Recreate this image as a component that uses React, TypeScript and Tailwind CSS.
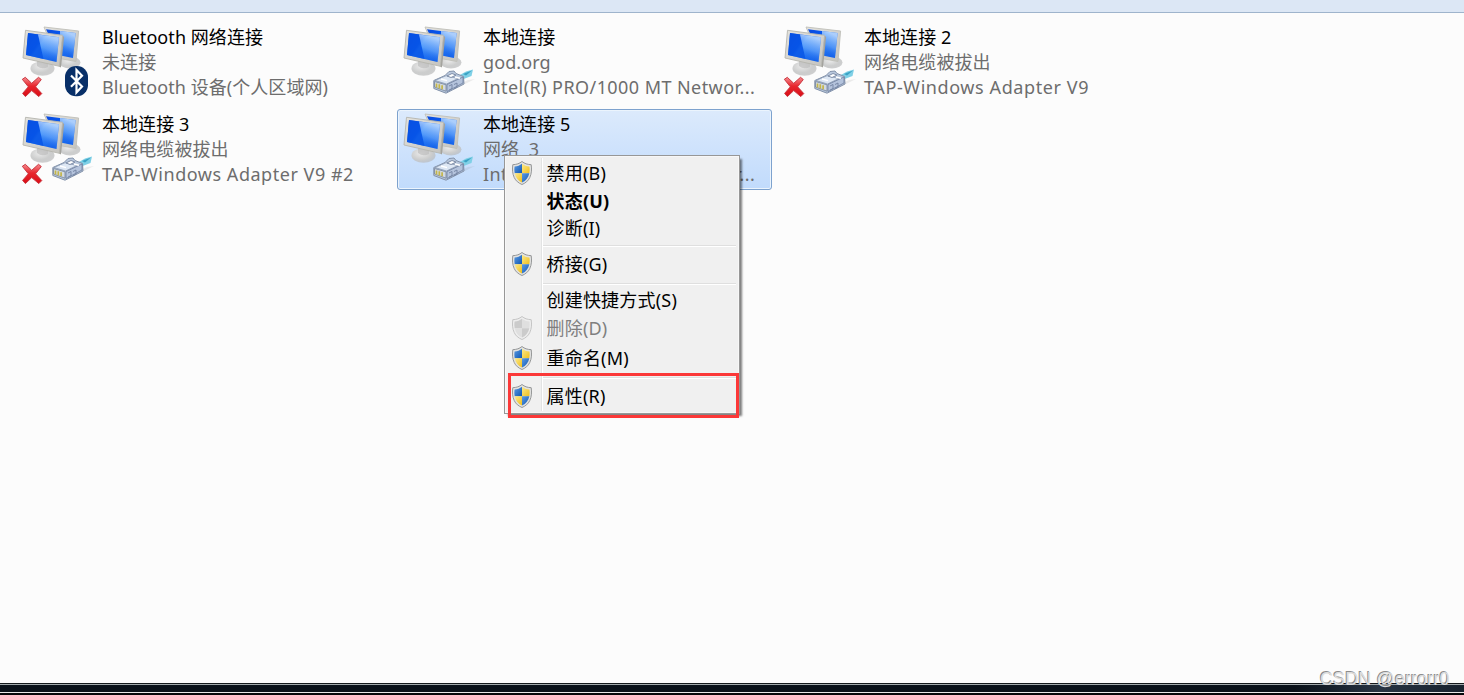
import React from 'react'

type Badge = 'bluetooth' | 'cable'

interface Connection {
  name: string
  status: string
  device: string
  badge: Badge
  off?: boolean
  selected?: boolean
  deviceCls?: string
}

const connections: Connection[] = [
  { name: 'Bluetooth 网络连接', status: '未连接', device: 'Bluetooth 设备(个人区域网)', badge: 'bluetooth', off: true, deviceCls: 'tracking-[0.05px]' },
  { name: '本地连接', status: 'god.org', device: 'Intel(R) PRO/1000 MT Networ...', badge: 'cable', deviceCls: 'tracking-[0.43px]' },
  { name: '本地连接 2', status: '网络电缆被拔出', device: 'TAP-Windows Adapter V9', badge: 'cable', off: true, deviceCls: 'tracking-[0.59px]' },
  { name: '本地连接 3', status: '网络电缆被拔出', device: 'TAP-Windows Adapter V9 #2', badge: 'cable', off: true, deviceCls: 'tracking-[0.53px]' },
  { name: '本地连接 5', status: '网络  3', device: 'Intel(R) PRO/1000 MT Networ...', badge: 'cable', selected: true, deviceCls: 'tracking-[0.43px]' },
]

function Defs() {
  return (
    <svg className="absolute h-0 w-0" aria-hidden="true">
      <defs>
        <linearGradient id="screen" x1="0" y1="0" x2="1" y2="0.6">
          <stop offset="0" stopColor="#0a49dc" />
          <stop offset="0.42" stopColor="#0758f0" />
          <stop offset="0.5" stopColor="#2379f6" />
          <stop offset="1" stopColor="#1260ea" />
        </linearGradient>
        <linearGradient id="gloss" x1="0.3" y1="0" x2="0" y2="1">
          <stop offset="0" stopColor="#cfe6ff" stopOpacity="0.8" />
          <stop offset="0.45" stopColor="#7db9ff" stopOpacity="0.55" />
          <stop offset="0.85" stopColor="#1b6cf0" stopOpacity="0.05" />
        </linearGradient>
        <linearGradient id="bezel" x1="0" y1="0" x2="1" y2="1">
          <stop offset="0" stopColor="#e4e3de" />
          <stop offset="1" stopColor="#c4c3bf" />
        </linearGradient>
        <radialGradient id="foot" cx="0.4" cy="0.35" r="0.7">
          <stop offset="0" stopColor="#ebebeb" />
          <stop offset="0.6" stopColor="#cdcece" />
          <stop offset="1" stopColor="#b4b5b6" stopOpacity="0.6" />
        </radialGradient>
        <linearGradient id="cross" x1="0" y1="0" x2="0" y2="1">
          <stop offset="0" stopColor="#f58a8e" />
          <stop offset="0.45" stopColor="#e8272e" />
          <stop offset="1" stopColor="#d90d16" />
        </linearGradient>
        <linearGradient id="shieldBlue" x1="0" y1="0" x2="1" y2="1">
          <stop offset="0" stopColor="#5c9ce2" />
          <stop offset="1" stopColor="#0f56b4" />
        </linearGradient>
        <linearGradient id="shieldGold" x1="0" y1="0" x2="1" y2="1">
          <stop offset="0" stopColor="#fbe98c" />
          <stop offset="1" stopColor="#f0bf1c" />
        </linearGradient>
      </defs>
    </svg>
  )
}

function ConnectionIcon({ badge, off }: { badge: Badge; off?: boolean }) {
  return (
    <svg className="h-[79px] w-[85px] shrink-0" viewBox="17 23 85 79">
      <ellipse cx="70" cy="62.5" rx="10.5" ry="6" fill="url(#foot)" />
      <path d="M44 27 78.6 31 76 61.500 57 58z" fill="url(#bezel)" stroke="#c0bfb9" strokeWidth="0.9" />
      <path d="M46 29.200 75.600 33 73 58 58 55z" fill="url(#screen)" />
      <path d="M60 31 75.600 33 73 58 60 55.500z" fill="url(#gloss)" />
      <ellipse cx="42.5" cy="68.500" rx="12" ry="7.300" fill="url(#foot)" />
      <path d="M37 61h11v6q-6 3-11-1z" fill="#bdbdbd" opacity="0.7" />
      <path d="M62.500 35.500 64.100 37 61 67.500 59 66.500z" fill="#a3a29d" />
      <path d="M25.500 30.300 62.600 35.300 59.300 66.300 23 58z" fill="url(#bezel)" stroke="#b6b5af" strokeWidth="0.9" />
      <path d="M28 33 59 37.200 56.500 62 26 55.100z" fill="url(#screen)" />
      <path d="M28 33 38 34.400 43.500 59 26 55.100z" fill="#0753e4" opacity="0.75" />
      <path d="M38 34.400 59 37.200 56.500 62 43.500 59z" fill="url(#gloss)" />
      {badge === 'cable' && (
        <g strokeLinejoin="round">
          <path d="m60 93 27-13 7-1-20 10z" fill="#777" opacity="0.12" />
          <path d="M78 75.500 85 71.500 92 69.500 90.500 76 80 80z" fill="#7fd0e6" />
          <path d="m82 74 9-3.500-6 5z" fill="#3aa2c4" />
          <path d="M52.800 80.500 64 75.500 68 71.500 73 71 75 73.500 82.500 76.500 83 84 65 93.200 52.800 88.500z" fill="#b8c7dc" stroke="#8392aa" strokeWidth="1" />
          <path d="M54 80.500 65 75.700 77 78.500 65.500 84z" fill="#dde7f4" stroke="#8c9ab2" strokeWidth="0.8" />
          <path d="m66 84.500 16-7.500v6l-16 8.600z" fill="#b4c3dc" stroke="#6e7f9e" strokeWidth="0.8" />
          <path d="m68 86 3-1.500v4l-3 1.600m5-5.600 3-1.500v4l-3 1.600" fill="none" stroke="#7282a0" strokeWidth="0.9" />
          <path d="m53.500 81.500 11.500 3.300v6.400l-11.500-4.200z" fill="#d2dae3" stroke="#75849b" strokeWidth="0.8" />
          <path d="M55.500 83.500v4m2.800-3.200v4.100m2.800-3.100v4" stroke="#c4b548" strokeWidth="1.700" />
          <path d="m66 76 5-2.500 4 1.600-5 2.400z" fill="#fff" stroke="#7584a0" strokeWidth="0.9" />
          <path d="m74 77 5 1.200M60 79l6 1.600" stroke="#fff" strokeWidth="1.400" />
        </g>
      )}
      {badge === 'bluetooth' && (
        <g>
          <rect x="65" y="66" width="23" height="30.300" rx="11" fill="#082f68" />
          <path d="m71 75.500 11 11-5.500 6V70l5.500 5.700-11 11" fill="none" stroke="#fff" strokeWidth="2.200" />
        </g>
      )}
      {off && (
        <path
          d="m22.300 79.300 3-2 6.400 6 6.800-6 2.800 2.200-5.700 7.300 6.200 6.800-3 3-7.100-6-6.300 6-2.800-3.200 5.700-6.600z"
          fill="url(#cross)"
          stroke="#c6303a"
          strokeWidth="0.9"
          strokeLinejoin="round"
        />
      )}
    </svg>
  )
}

function ShieldIcon({ disabled }: { disabled?: boolean }) {
  const gold = disabled ? '#dfdfdf' : 'url(#shieldGold)'
  const blue = disabled ? '#cbcbcb' : 'url(#shieldBlue)'
  return (
    <svg className="h-6 w-5 shrink-0" viewBox="0 0 20 24">
      <path
        d="M10 .5C7.500 2.600 4.500 3.500 .8 3.700 .2 8 .3 12.500 2.200 16.500 3.800 20 6.500 22 10 23.500 13.500 22 16.200 20 17.800 16.500 19.700 12.500 19.800 8 19.200 3.700 15.500 3.500 12.500 2.600 10 .5z"
        fill={disabled ? '#ededed' : '#e2e2e0'}
        stroke={disabled ? '#c0c0c0' : '#8b8d8e'}
        strokeWidth="0.9"
      />
      <path d="M10 2.700C7.800 4.300 5.500 5.200 2.600 5.500 2.200 8 2.300 10 2.700 12.200H10z" fill={blue} />
      <path d="M10 2.700c2.200 1.600 4.500 2.500 7.400 2.800.4 2.500.3 4.500-.1 6.700H10z" fill={gold} />
      <path d="M2.700 12.200c.9 4.500 3.200 7.300 7.300 9.300v-9.300z" fill={gold} />
      <path d="M17.300 12.200c-.9 4.500-3.200 7.300-7.300 9.300v-9.300z" fill={blue} />
    </svg>
  )
}

function Tile({ c }: { c: Connection }) {
  return (
    <div
      className={
        c.selected
          ? 'flex h-[81px] rounded-[3px] border border-[#7da2ce] bg-linear-to-b from-[#dceafc] to-[#c1dbfc] shadow-[inset_0_0_0_1px_#ebf4fd]'
          : 'flex h-[81px] border border-transparent'
      }
    >
      <ConnectionIcon badge={c.badge} off={c.off} />
      <div className="flex flex-col pt-[2px] leading-[25px] whitespace-pre text-[#6d6d6d]">
        <span className="tracking-[0.06px] text-black">{c.name}</span>
        <span className="tracking-[0.1px]">{c.status}</span>
        <span className={c.deviceCls}>{c.device}</span>
      </div>
    </div>
  )
}

interface ItemProps {
  label: string
  cls: string
  shield?: boolean
  disabled?: boolean
  bold?: boolean
}

function MenuItem({ label, cls, shield, disabled, bold }: ItemProps) {
  return (
    <div className={`flex items-center tracking-[0.2px] ${cls}`}>
      <div className="flex w-[41.5px] shrink-0 pl-[7px]">{shield && <ShieldIcon disabled={disabled} />}</div>
      <span className={disabled ? 'text-[#7f7f7f]' : bold ? 'font-bold' : ''}>{label}</span>
    </div>
  )
}

function Separator() {
  return <div className="mr-[3px] ml-[38px] h-[2px] shrink-0 border-t border-[#dfdfdf] bg-white" />
}

function ContextMenu() {
  return (
    <div className="absolute top-[155px] left-[504px] flex h-[259px] w-[236px] flex-col border border-[#979797] bg-[#f0f0f0] text-black shadow-[3px_3px_2px_-1px_rgba(0,0,0,0.5),inset_0_0_0_1px_#f7f7f7]">
      <div className="absolute top-[2px] bottom-[2px] left-[36px] w-[2px] border-l border-[#e2e3e3] bg-white" />
      <MenuItem label="禁用(B)" cls="h-[34px]" shield />
      <MenuItem label="状态(U)" cls="h-[23px]" bold />
      <MenuItem label="诊断(I)" cls="h-[32px] pb-[2px]" />
      <Separator />
      <MenuItem label="桥接(G)" cls="h-[36px] pb-[2px]" shield />
      <Separator />
      <MenuItem label="创建快捷方式(S)" cls="h-[32px] pb-[2px]" />
      <MenuItem label="删除(D)" cls="h-[22px]" shield disabled />
      <MenuItem label="重命名(M)" cls="h-[38px]" shield />
      <Separator />
      <MenuItem label="属性(R)" cls="h-[34px]" shield />
    </div>
  )
}

export default function App() {
  return (
    <div className="relative flex h-[695px] w-[1464px] flex-col overflow-hidden bg-[#fcfcfc] font-['Noto_Sans','Noto_Sans_CJK_SC',sans-serif] text-[18px]">
      <Defs />
      <header className="h-[13px] shrink-0 border-b border-[#9fb4cc] bg-[#dce7f5]" />
      <main className="grid flex-1 grid-cols-[375px_375px_375px] content-start gap-[6px] pt-[9px] pl-4">
        {connections.map((c) => (
          <Tile key={c.name} c={c} />
        ))}
      </main>
      <footer className="flex h-[12px] shrink-0 flex-col bg-[#0a1119]">
        <div className="h-px bg-[#15191c]" />
        <div className="h-px bg-[#a2a9ab]" />
        <div className="flex h-[7px] justify-end">
          <div className="h-[7px] w-[170px] bg-linear-to-r from-[#0a1119] via-[#283442] to-[#18222e]" />
        </div>
        <div className="h-px bg-[#e8e8e8]" />
        <div className="h-[2px] bg-[#05070a]" />
      </footer>
      <ContextMenu />
      <div className="absolute top-[373px] left-[508px] h-[45px] w-[231px] border-[3px] border-[#fb3838]" />
      <div className="absolute top-[668px] left-[1320px] font-['Liberation_Sans',sans-serif] text-[18px] leading-[22px] tracking-[0.1px] whitespace-nowrap text-[#dcdcdc] [text-shadow:-1px_-1px_0_#8d8d8d]">
        CSDN @errorr0
      </div>
    </div>
  )
}
